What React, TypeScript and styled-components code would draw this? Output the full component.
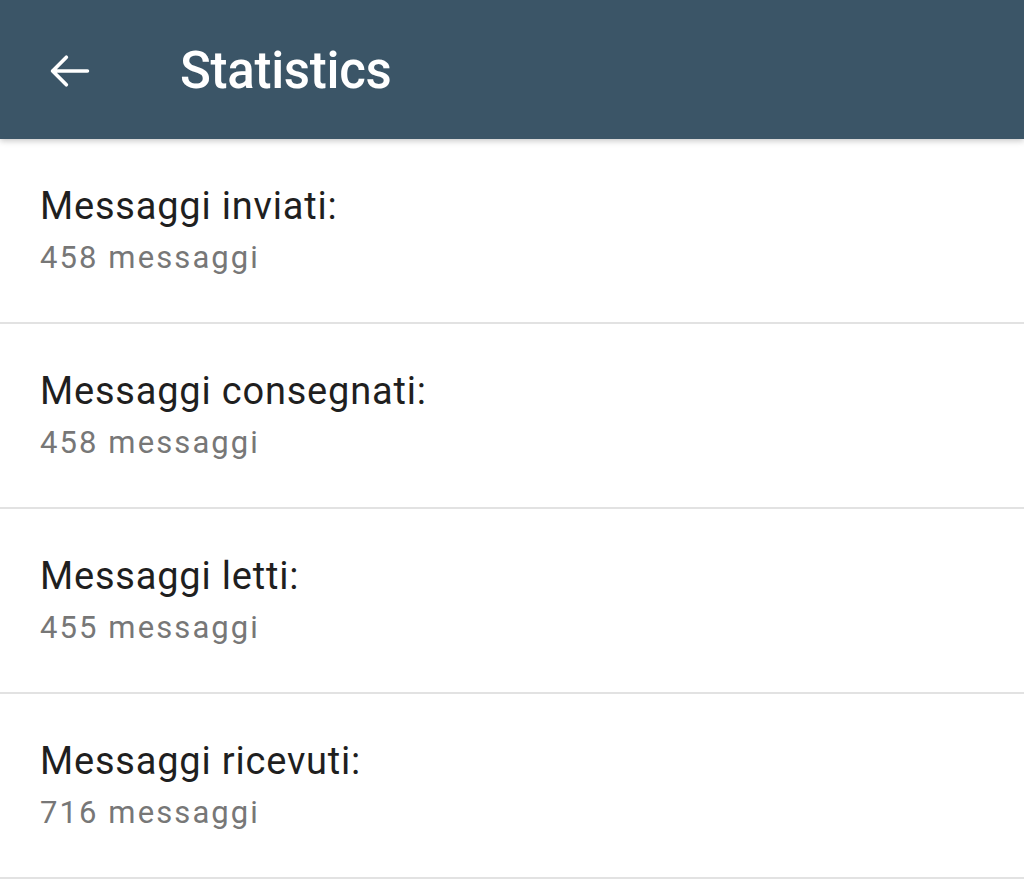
import React from "react";
import styled, { createGlobalStyle } from "styled-components";

const GlobalStyle = createGlobalStyle`
  html, body {
    margin: 0;
    padding: 0;
    background: #ffffff;
    font-family: Roboto, "Noto Sans", "Liberation Sans", sans-serif;
  }
`;

const Screen = styled.div`
  width: 1024px;
  height: 893px;
  overflow: hidden;
  background: #ffffff;
`;

const AppBar = styled.header`
  position: relative;
  height: 139px;
  background: #3b5567;
  display: flex;
  align-items: center;
  padding: 2px 0 0 48px;
  box-sizing: border-box;
  box-shadow: 0 2px 6px rgba(0, 0, 0, 0.22);
  z-index: 1;
`;

const BackButton = styled.button`
  width: 44px;
  height: 44px;
  padding: 0;
  margin: 0 88px 0 0;
  border: none;
  background: transparent;
  display: flex;
  align-items: center;
  justify-content: center;
`;

const Title = styled.h1`
  margin: 0;
  font-size: 51px;
  font-weight: 500;
  color: #ffffff;
  letter-spacing: -0.3px;
  line-height: 1;
`;

const List = styled.ul`
  list-style: none;
  margin: 0;
  padding: 0;
`;

const Row = styled.li`
  height: 185px;
  box-sizing: border-box;
  border-bottom: 2px solid #e2e2e2;
  padding: 43px 0 0 40px;
`;

const Label = styled.div`
  font-size: 38px;
  color: #1f1f1f;
  line-height: 48px;
  letter-spacing: 0.8px;
`;

const Value = styled.div`
  font-size: 31px;
  color: #777777;
  line-height: 40px;
  letter-spacing: 2.1px;
  margin-top: 8px;
`;

const stats = [
  { label: "Messaggi inviati:", value: "458 messaggi" },
  { label: "Messaggi consegnati:", value: "458 messaggi" },
  { label: "Messaggi letti:", value: "455 messaggi" },
  { label: "Messaggi ricevuti:", value: "716 messaggi" },
];

export default function App() {
  return (
    <Screen>
      <GlobalStyle />
      <AppBar>
        <BackButton aria-label="Back">
          <svg width="44" height="44" viewBox="0 0 24 24" fill="none">
            <path
              d="M21.5 12H2.5M10 4.5L2.5 12L10 19.5"
              stroke="#ffffff"
              strokeWidth="2"
              strokeLinecap="round"
              strokeLinejoin="round"
            />
          </svg>
        </BackButton>
        <Title>Statistics</Title>
      </AppBar>
      <List>
        {stats.map((s) => (
          <Row key={s.label}>
            <Label>{s.label}</Label>
            <Value>{s.value}</Value>
          </Row>
        ))}
      </List>
    </Screen>
  );
}
